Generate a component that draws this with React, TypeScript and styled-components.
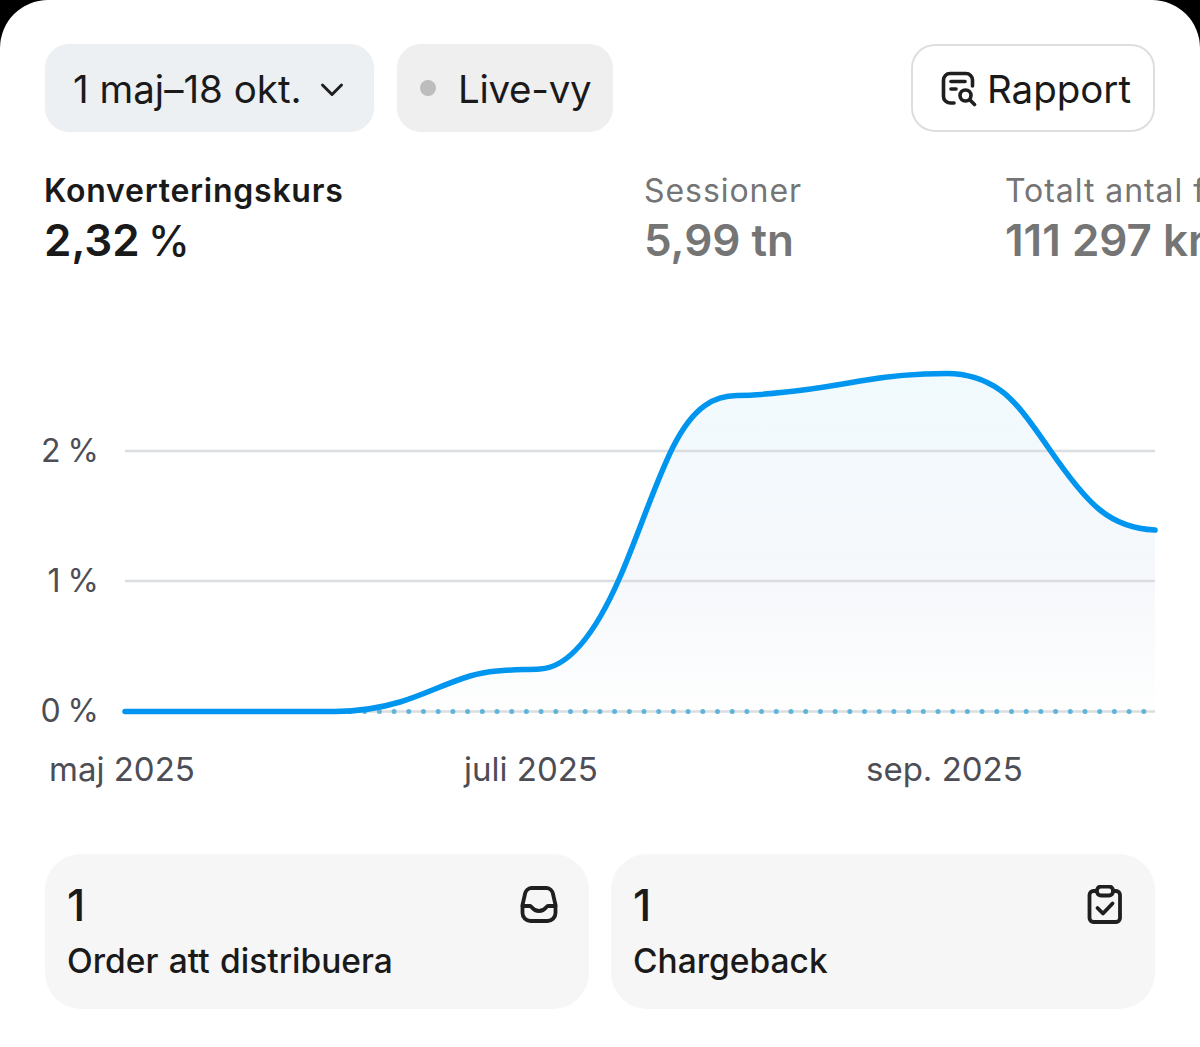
import React from 'react'
import styled, { createGlobalStyle } from 'styled-components'

const GlobalStyle = createGlobalStyle`
  html, body {
    margin: 0;
    padding: 0;
    background: #000;
  }
  body {
    font-family: Inter, "Liberation Sans", sans-serif;
    -webkit-font-smoothing: antialiased;
  }
`

// x, y and slope of the curve at each knot
const KNOTS: [number, number, number][] = [
  [125, 711.5, 0], [335, 711.5, 0], [400, 702, -0.3], [470, 676, -0.3], [540, 669, -0.05],
  [620, 577, -2.3], [673, 447, -2], [737, 395.5, -0.02], [860, 381, -0.18], [947, 373.5, 0],
  [1000, 390, 0.7], [1050, 450, 1.45], [1100, 510, 0.8], [1155, 530, 0.05],
]

const curvePath = (knots: [number, number, number][]) => {
  let d = `M${knots[0][0]} ${knots[0][1]}`
  for (let i = 0; i < knots.length - 1; i++) {
    const [x1, y1, m1] = knots[i]
    const [x2, y2, m2] = knots[i + 1]
    const h = (x2 - x1) / 3
    d += ` C${(x1 + h).toFixed(1)} ${(y1 + m1 * h).toFixed(1)} ${(x2 - h).toFixed(1)} ${(y2 - m2 * h).toFixed(1)} ${x2} ${y2}`
  }
  return d
}

const LINE = curvePath(KNOTS)

const Screen = styled.div`
  width: 1200px;
  height: 1047px;
  box-sizing: border-box;
  padding: 44px 45px 0;
  background: #fff;
  border-radius: 48px 48px 0 0;
  overflow: hidden;
  color: #1a1a1a;
`

const Toolbar = styled.div`
  display: flex;
  align-items: stretch;
  gap: 23px;
  height: 88px;
`

const Pill = styled.div<{ $bg: string }>`
  display: flex;
  align-items: center;
  box-sizing: border-box;
  height: 88px;
  padding-top: 2px;
  border-radius: 24px;
  background: ${(p) => p.$bg};
  font-size: 38.5px;
  white-space: nowrap;
`

const DatePill = styled(Pill)`
  width: 329px;
  padding-left: 28px;
  gap: 18px;
`

const LivePill = styled(Pill)`
  width: 216px;
  padding-left: 23px;
  gap: 22px;
  letter-spacing: -0.3px;
`

const LiveDot = styled.span`
  width: 16px;
  height: 16px;
  margin-top: -2px;
  border-radius: 50%;
  background: #bdbdbd;
`

const ReportButton = styled.div`
  display: flex;
  align-items: center;
  justify-content: center;
  gap: 10px;
  box-sizing: border-box;
  width: 244px;
  height: 88px;
  padding: 2px 0 0 6px;
  margin-left: auto;
  border: 2px solid #dedede;
  border-radius: 24px;
  font-size: 38.5px;
`

const Metrics = styled.div`
  display: flex;
  margin: 40px 0 0 -1px;
  height: 110px;
`

const Metric = styled.div<{ $width: number; $muted?: boolean }>`
  flex: 0 0 ${(p) => p.$width}px;
  color: ${(p) => (p.$muted ? '#757575' : '#1a1a1a')};
  white-space: nowrap;
`

const MetricLabel = styled.div<{ $strong?: boolean }>`
  font-size: 32px;
  line-height: 38px;
  letter-spacing: ${(p) => (p.$strong ? '0.75px' : '0.95px')};
  font-weight: ${(p) => (p.$strong ? 600 : 400)};
`

const MetricValue = styled.div<{ $tight?: boolean }>`
  font-size: 44px;
  line-height: 52px;
  font-weight: 600;
  word-spacing: ${(p) => (p.$tight ? '-3px' : '0')};
  margin-top: 4px;
`

const PercentSign = styled.span`
  font-size: 42px;
  font-weight: 500;
`

const Chart = styled.svg`
  display: block;
  width: 1110px;
  height: 470px;
  margin-top: 48px;
  overflow: visible;
`

const AxisText = styled.text`
  font-family: Inter, "Liberation Sans", sans-serif;
  font-size: 32px;
  fill: #4d4d56;
`

const ScaleText = styled(AxisText)`
  word-spacing: -2px;
`

const MonthText = styled(AxisText)`
  font-size: 33px;
`

const Cards = styled.div`
  display: grid;
  grid-template-columns: 543.5px 544px;
  gap: 22.5px;
  margin-top: 54px;
`

const Card = styled.div`
  display: flex;
  justify-content: space-between;
  box-sizing: border-box;
  height: 155px;
  padding: 24px 30px 0 22px;
  border-radius: 36px;
  background: #f6f6f6;
`

const CardCount = styled.div`
  font-size: 44px;
  line-height: 54px;
  font-weight: 500;
`

const CardLabel = styled.div`
  font-size: 33.5px;
  line-height: 40px;
  font-weight: 500;
  word-spacing: 1.5px;
  margin-top: 9px;
`

const CardIcon = styled.svg`
  width: 40px;
  height: 40px;
  margin-top: 7px;
  fill: none;
  stroke: #1f1f1f;
  stroke-width: 3.8;
  stroke-linecap: round;
  stroke-linejoin: round;
`

const Chevron = () => (
  <svg width="24" height="24" viewBox="0 0 24 24" fill="none" stroke="#1f1f1f" strokeWidth="3" strokeLinecap="round" strokeLinejoin="round">
    <path d="M2.500 8 L12 17.500 L21.500 8" />
  </svg>
)

const ReportIcon = () => (
  <svg width="36" height="36" viewBox="0 0 36 36" fill="none" stroke="#1f1f1f" strokeWidth="3.6" strokeLinecap="round" strokeLinejoin="round">
    <path d="M13 32 H9 A6.5 6.5 0 0 1 2.5 25.500 V9 A6.5 6.5 0 0 1 9 2.500 H25 A6.5 6.5 0 0 1 31.5 9 V15" />
    <path d="M10 10.500 H24" />
    <path d="M10 18 H15" />
    <circle cx="24.500" cy="24.500" r="5.500" />
    <path d="M29 29 L33.500 33.500" />
  </svg>
)

export default function App() {
  return (
    <>
      <GlobalStyle />
      <Screen>
        <Toolbar>
          <DatePill $bg="#edf0f3">
            1 maj–18 okt.
            <Chevron />
          </DatePill>
          <LivePill $bg="#efefef">
            <LiveDot />
            Live-vy
          </LivePill>
          <ReportButton>
            <ReportIcon />
            Rapport
          </ReportButton>
        </Toolbar>

        <Metrics>
          <Metric $width={600}>
            <MetricLabel $strong>Konverteringskurs</MetricLabel>
            <MetricValue $tight>2,32 <PercentSign>%</PercentSign></MetricValue>
          </Metric>
          <Metric $width={361} $muted>
            <MetricLabel>Sessioner</MetricLabel>
            <MetricValue>5,99 tn</MetricValue>
          </Metric>
          <Metric $width={400} $muted>
            <MetricLabel>Totalt antal f</MetricLabel>
            <MetricValue>111 297 kr</MetricValue>
          </Metric>
        </Metrics>

        <Chart viewBox="45 330 1110 470">
          <defs>
            <linearGradient id="area" x1="0" y1="373" x2="0" y2="725" gradientUnits="userSpaceOnUse">
              <stop offset="0" stopColor="#f1fafe" />
              <stop offset="0.6" stopColor="#f6f8fb" />
              <stop offset="1" stopColor="#ffffff" />
            </linearGradient>
          </defs>
          <path d={`${LINE} L1155 725 L125 725 Z`} fill="url(#area)" />
          <path d="M125 451 H1155 M125 581 H1155 M125 711.500 H1155" stroke="#dcdde0" strokeWidth="2.500" fill="none" />
          <path d="M350 711.500 H1155" stroke="#5fb4da" strokeWidth="5" strokeLinecap="round" strokeDasharray="0 14.700" fill="none" />
          <path d={LINE} stroke="#0095ee" strokeWidth="5.500" strokeLinecap="round" fill="none" />
          <ScaleText x="99" y="462" textAnchor="end">2 %</ScaleText>
          <ScaleText x="99" y="592" textAnchor="end">1 %</ScaleText>
          <ScaleText x="99" y="722" textAnchor="end">0 %</ScaleText>
          <MonthText x="49" y="781">maj 2025</MonthText>
          <MonthText x="464" y="781">juli 2025</MonthText>
          <MonthText x="866" y="781">sep. 2025</MonthText>
        </Chart>

        <Cards>
          <Card>
            <div>
              <CardCount>1</CardCount>
              <CardLabel>Order att distribuera</CardLabel>
            </div>
            <CardIcon viewBox="0 0 40 40">
              <path d="M3.500 20 L6 9 A7 7 0 0 1 12.500 3 H27.500 A7 7 0 0 1 34 9 L36.500 20 V28 A8 8 0 0 1 28.500 36 H11.500 A8 8 0 0 1 3.500 28 Z" />
              <path d="M3.500 21 H11 C13 21 13.500 26 20 26 C26.500 26 27 21 29 21 H36.500" />
            </CardIcon>
          </Card>
          <Card>
            <div>
              <CardCount>1</CardCount>
              <CardLabel>Chargeback</CardLabel>
            </div>
            <CardIcon viewBox="0 0 40 40">
              <path d="M11 6 H8.500 A4 4 0 0 0 4.500 10 V33 A4 4 0 0 0 8.500 37 H31 A4 4 0 0 0 35 33 V10 A4 4 0 0 0 31 6 H28" />
              <rect x="12" y="1.500" width="16" height="9" rx="4" />
              <path d="M12.500 23 L18 28.500 L27.500 18.500" />
            </CardIcon>
          </Card>
        </Cards>
      </Screen>
    </>
  )
}
